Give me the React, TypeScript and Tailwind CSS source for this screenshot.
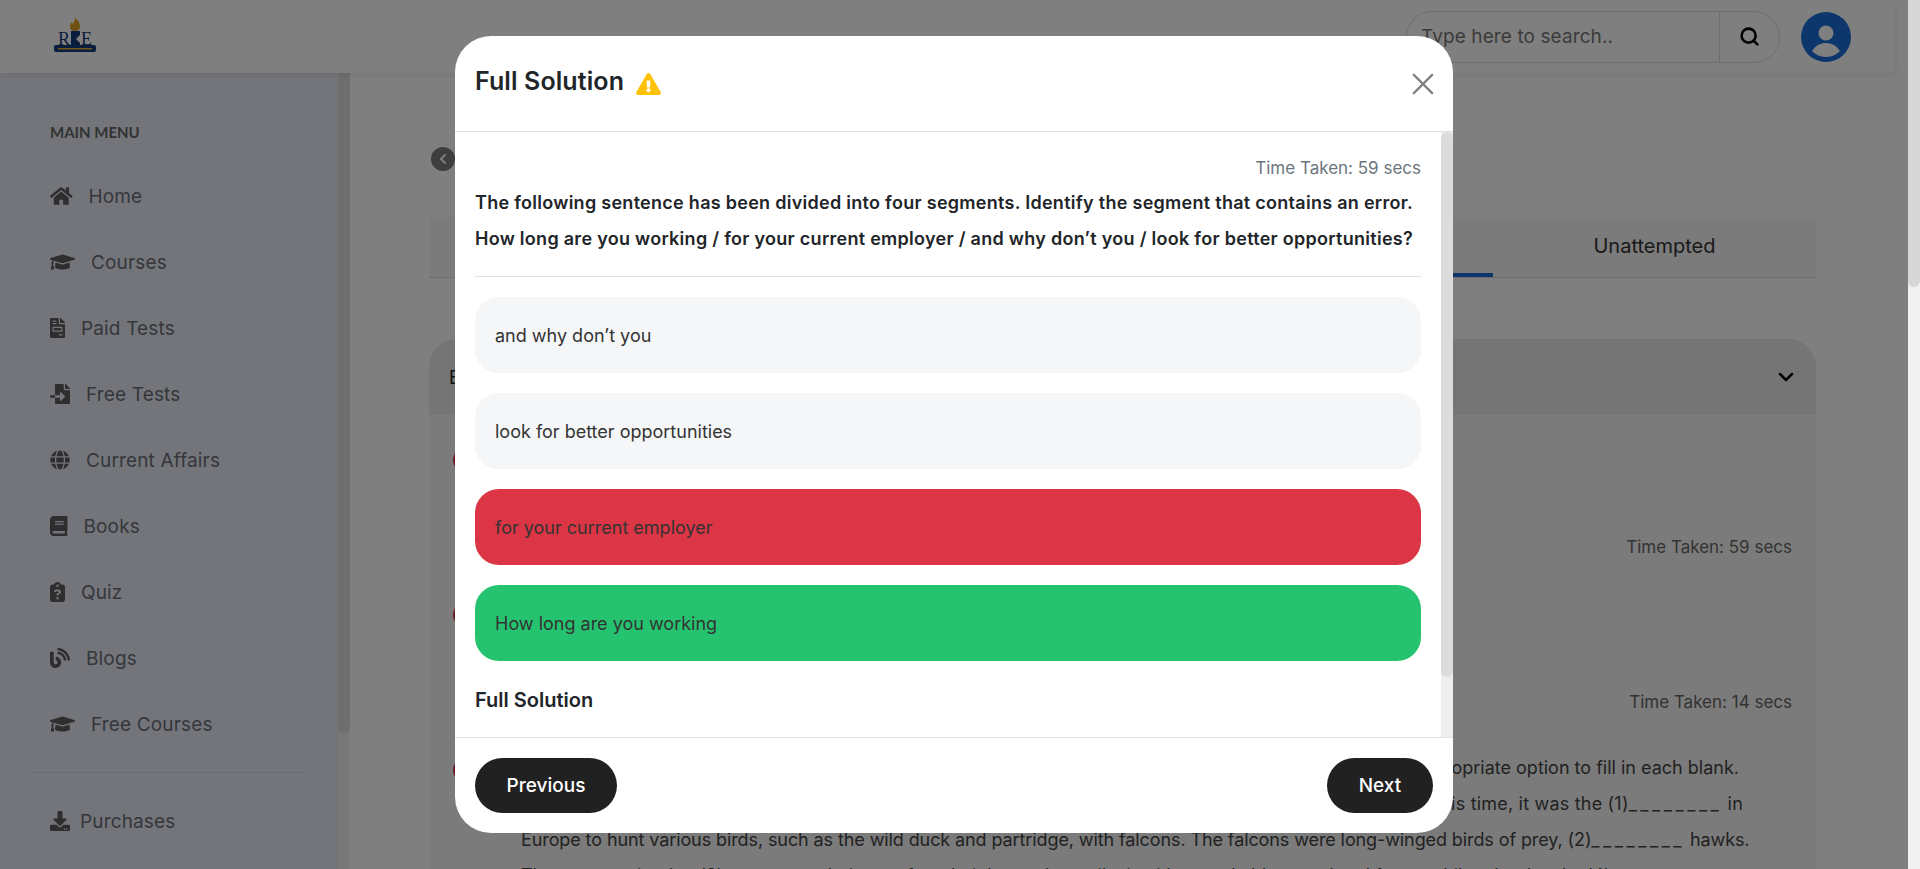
import type { ReactNode } from "react";
import { FaHome, FaGraduationCap, FaFileInvoice, FaFileImport, FaGlobe, FaBook, FaBlog, FaDownload, FaChevronLeft, FaExclamationTriangle } from "react-icons/fa";
import { FaClipboardQuestion } from "react-icons/fa6";
import { ChevronDown, Search } from "lucide-react";

// react-icons sets width="1em", so each glyph's real width has to be written out
const menu = [
  { label: "Home", icon: FaHome, size: "w-[22.5px]" },
  { label: "Courses", icon: FaGraduationCap, size: "w-[25px]" },
  { label: "Paid Tests", icon: FaFileInvoice, size: "w-[15px]" },
  { label: "Free Tests", icon: FaFileImport, size: "w-[20px]" },
  { label: "Current Affairs", icon: FaGlobe, size: "w-[20px]" },
  { label: "Books", icon: FaBook, size: "w-[17.5px]" },
  { label: "Quiz", icon: FaClipboardQuestion, size: "w-[15px]" },
  { label: "Blogs", icon: FaBlog, size: "w-[20px]" },
  { label: "Free Courses", icon: FaGraduationCap, size: "w-[25px]" },
];

const options = [
  { text: "and why don’t you", cls: "bg-[#f5f6f8]" },
  { text: "look for better opportunities", cls: "bg-[#f5f6f8]" },
  { text: "for your current employer", cls: "bg-[#dc3545]" },
  { text: "How long are you working", cls: "bg-[#25c370]" },
];

function Logo() {
  return (
    <div className="relative mb-[3px] h-[36px] w-[42px]">
      <svg viewBox="0 0 42 36" className="absolute inset-0 h-full w-full">
        <path d="M21 0c1 3 5 4 5 9 0 3-2 5-5 5s-5-2-5-5c0-2 1-3 2-4 0 1 1 2 1 2 1-2 2-4 2-7z" fill="#e0a020" />
        <path d="M17 14h9v4l-4 4 4 4v5h-9z" fill="#123a7a" />
        <rect x="0" y="28" width="42" height="7" rx="2" fill="#123a7a" />
        <rect x="4" y="31" width="34" height="1.5" fill="#e0b030" />
      </svg>
      <span className="absolute left-[4px] top-[13px] font-['Liberation_Serif',serif] text-[18px] leading-none text-[#123a7a]">R</span>
      <span className="absolute right-[4px] top-[13px] font-['Liberation_Serif',serif] text-[18px] leading-none text-[#123a7a]">E</span>
    </div>
  );
}

function Sidebar() {
  return (
    <aside className="flex w-[350px] shrink-0">
      <div className="w-[338px] bg-[#e7ebf7] pl-[50px] pt-[45px]">
        <div className="mb-[17px] h-[28px] font-['Lato',sans-serif] text-[15px] font-bold leading-[28px] text-[#666]">MAIN MENU</div>
        {menu.map((m) => (
          <div key={m.label} className="flex h-[66px] items-center gap-4 text-[19px] tracking-[0.15px] text-[#6b6e75]">
            <m.icon className={`h-[20px] shrink-0 text-[#5c5c5c] ${m.size}`} />
            <span className="pt-[2px]">{m.label}</span>
          </div>
        ))}
        <div className="-ml-[20px] mb-[15px] mt-[15px] w-[278px] border-t border-[#d5d9e4]" />
        <div className="flex h-[66px] items-center gap-[10px] text-[19px] tracking-[0.15px] text-[#6b6e75]">
          <FaDownload className="h-[20px] w-[20px] shrink-0 text-[#5c5c5c]" />
          <span className="pt-[2px]">Purchases</span>
        </div>
      </div>
      <div className="h-full w-[12px] bg-[#f0f0f0]">
        <div className="h-[660px] rounded-b-md bg-[#dcdcdc]" />
      </div>
    </aside>
  );
}

function Header() {
  return (
    <header className="relative z-10 flex h-[73px] w-[1895px] shrink-0 items-center justify-between bg-white pl-[54px] pr-[44px] shadow-[0_2px_6px_rgba(0,0,0,0.08)]">
      <Logo />
      <div className="flex items-center gap-[21px]">
        <div className="flex h-[52px] w-[374px] items-center rounded-full border border-[#ddd]">
          <div className="flex-1 pl-[14px] pt-[2px] text-[19px] tracking-[0.1px] text-[#777]">Type here to search..</div>
          <div className="flex h-full w-[60px] items-center justify-center border-l border-[#ddd]">
            <Search className="h-[21px] w-[21px] text-black" strokeWidth={3} />
          </div>
        </div>
        <svg viewBox="0 0 50 50" className="h-[50px] w-[50px]">
          <circle cx="25" cy="25" r="25" fill="#1a6ed8" />
          <circle cx="25" cy="21" r="7.5" fill="#fff" />
          <path d="M11 39c4-6 9-8 14-8s10 2 14 8c-3 3-8 6-14 6s-11-3-14-6z" fill="#fff" />
        </svg>
      </div>
    </header>
  );
}

function Question({ time, children }: { time?: string; children?: ReactNode }) {
  return (
    <div className="relative h-[155px] pl-[92px] pr-[24px]">
      <span className="absolute left-[24px] top-[23px] h-[24px] w-[24px] rounded-full bg-[#dc3545]" />
      {children}
      {time && <div className="absolute right-[24px] top-[110px] text-[17px] text-[#666]">{time}</div>}
    </div>
  );
}

function Blank() {
  return <span className="tracking-[3.5px]">________</span>;
}

function Content() {
  return (
    <main className="min-w-0 flex-1 overflow-hidden pl-[79px] pr-[92px] pt-[74px]">
      <div className="ml-[2px] flex h-[24px] w-[24px] items-center justify-center rounded-full bg-[#7c7c7c]">
        <FaChevronLeft className="text-[12px] text-white" />
      </div>
      <div className="mt-[46px] flex h-[61px] border-b border-[#ddd] bg-[#f7f7f7] text-[20px] text-[#333]">
        <div className="flex-1" />
        <div className="w-[60px] border-b-4 border-[#1a6ed8]" />
        <div className="flex w-[323px] items-center justify-center pb-[2px]">Unattempted</div>
      </div>
      <div className="mt-[61px] rounded-t-[28px] bg-[#f6f6f6]">
        <div className="flex h-[76px] items-center justify-between rounded-t-[28px] bg-[#ebebeb] pl-[20px] pr-[18px] text-[18px] text-[#222]">
          E
          <ChevronDown className="h-[24px] w-[24px] text-black" strokeWidth={2.5} />
        </div>
        <div className="pt-[10px]">
          <Question time="Time Taken: 59 secs" />
          <Question time="Time Taken: 14 secs" />
          <Question>
            <div className="whitespace-nowrap pt-[15px] text-[18px] leading-[36px] tracking-[-0.1px] text-[#444]">
              <div className="flex justify-end pr-[53px] tracking-normal">opriate option to fill in each blank.</div>
              <div className="flex justify-end pr-[49px] tracking-[0.2px]"><span>is time, it was the (1)<Blank /> in</span></div>
              <div>Europe to hunt various birds, such as the wild duck and partridge, with falcons. The falcons were long-winged birds of prey, (2)<Blank /> hawks.</div>
              <div>They were trained to (3)<Blank /> their prey from heights and to strike it with remarkable speed and force, while other hawks (4)<Blank /></div>
            </div>
          </Question>
        </div>
      </div>
    </main>
  );
}

function SolutionModal() {
  return (
    <div className="absolute inset-0 z-20 flex items-center justify-center bg-black/50">
      <div className="flex h-[797px] w-[998px] flex-col overflow-hidden rounded-[36px] bg-white text-[#212529]">
        <div className="flex h-[96px] shrink-0 items-center justify-between border-b border-[#dee2e6] pl-[20px] pr-[19px]">
          <div className="flex items-center gap-3 pb-[4px]">
            <h2 className="text-[25px] font-semibold tracking-[0.1px]">Full Solution</h2>
            <FaExclamationTriangle className="mt-[4px] h-[22px] w-[25px] text-[#ffc107]" />
          </div>
          <svg viewBox="0 0 20 20" className="h-[22px] w-[22px] text-[#808080]" stroke="currentColor" strokeWidth="2">
            <path d="M1 1l18 18M19 1L1 19" />
          </svg>
        </div>
        <div className="flex min-h-0 flex-1">
          <div className="min-w-0 flex-1 pl-[20px] pr-[20px] pt-[23px]">
            <div className="h-[30px] text-right text-[17px] leading-[26px] text-[#6c757d]">Time Taken: 59 secs</div>
            <div className="border-b border-[#dee2e6] pb-[19px] text-[18px] font-semibold leading-[36px] tracking-[0.28px]">
              <p>The following sentence has been divided into four segments. Identify the segment that contains an error.</p>
              <p>How long are you working / for your current employer / and why don’t you / look for better opportunities?</p>
            </div>
            <div className="mt-[20px] flex flex-col gap-[20px]">
              {options.map((o) => (
                <div key={o.text} className={`flex h-[76px] items-center rounded-[24px] pl-[20px] pt-[1px] text-[18px] text-[#333] ${o.cls}`}>
                  {o.text}
                </div>
              ))}
            </div>
            <div className="mt-[24px] text-[20px] font-semibold">Full Solution</div>
          </div>
          <div className="w-[12px] shrink-0 bg-[#eeeeee]">
            <div className="h-[545px] rounded-md bg-[#dcdcdc]" />
          </div>
        </div>
        <div className="flex h-[96px] shrink-0 items-center justify-between border-t border-[#dee2e6] pl-[20px] pr-[20px]">
          <button className="h-[55px] w-[142px] rounded-[28px] bg-[#212121] pt-[2px] text-[19px] font-medium text-white">Previous</button>
          <button className="h-[55px] w-[106px] rounded-[28px] bg-[#212121] pt-[2px] text-[19px] font-medium text-white">Next</button>
        </div>
      </div>
    </div>
  );
}

export default function App() {
  return (
    <div className="flex h-screen overflow-hidden bg-white font-['Inter',sans-serif]">
      <div className="relative flex min-w-0 flex-1 flex-col">
        <Header />
        <div className="flex min-h-0 flex-1">
          <Sidebar />
          <Content />
        </div>
        <SolutionModal />
      </div>
      <div className="w-[12px] shrink-0 bg-[#f1f1f1]">
        <div className="h-[287px] rounded-b-md bg-[#d6d6d6]" />
      </div>
    </div>
  );
}
